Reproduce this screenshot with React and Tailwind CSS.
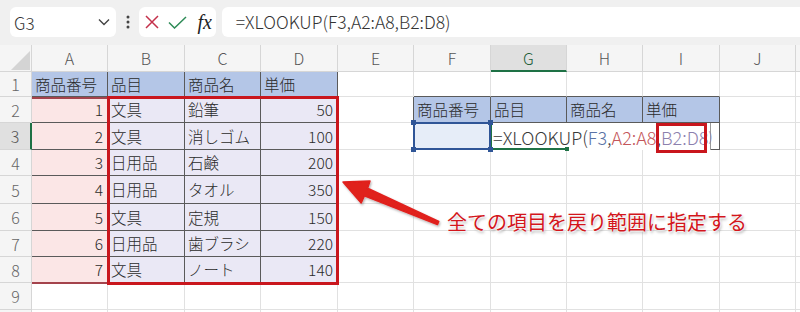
import React from 'react';

const LETTERS = ['A', 'B', 'C', 'D', 'E', 'F', 'G', 'H', 'I', 'J', ''];

const table1 = [
  ['商品番号', '品目', '商品名', '単価'],
  [1, '文具', '鉛筆', 50],
  [2, '文具', '消しゴム', 100],
  [3, '日用品', '石鹸', 200],
  [4, '日用品', 'タオル', 350],
  [5, '文具', '定規', 150],
  [6, '日用品', '歯ブラシ', 220],
  [7, '文具', 'ノート', 140],
];

const table2Head = ['商品番号', '品目', '商品名', '単価'];

// which cells belong to a bordered table
const inTable = (r, c) =>
  (r >= 1 && r <= 8 && c >= 0 && c <= 3) || (r >= 2 && r <= 3 && c >= 5 && c <= 8);

function Chevron() {
  return (
    <svg width="12" height="8" viewBox="0 0 12 8">
      <polyline points="1,1.5 6,6.5 11,1.5" fill="none" stroke="#444" strokeWidth="1.4" />
    </svg>
  );
}

function FormulaBar() {
  return (
    <div className="h-[45px] bg-[#f0f0f0] flex items-start pt-[7px] pl-[10px]">
      <div className="w-[110px] h-[30px] bg-white rounded-[6px] flex items-center justify-between pl-[4px] pr-[6px]">
        <span className="text-[17px] text-[#333] leading-none">G3</span>
        <Chevron />
      </div>
      <div className="w-[24px] h-[30px] flex items-center justify-center">
        <svg width="4" height="14" viewBox="0 0 4 14">
          <circle cx="2" cy="2" r="1.5" fill="#444" />
          <circle cx="2" cy="7" r="1.5" fill="#444" />
          <circle cx="2" cy="12" r="1.5" fill="#444" />
        </svg>
      </div>
      <div className="w-[79px] h-[30px] bg-white rounded-[6px] flex items-center pl-[6px] gap-[9px]">
        <svg width="14" height="14" viewBox="0 0 14 14">
          <path d="M1 1 L13 13 M13 1 L1 13" stroke="#c4314b" strokeWidth="1.5" fill="none" />
        </svg>
        <svg width="19" height="13" viewBox="0 0 19 13">
          <polyline points="1,6.5 6.5,12 18,1" stroke="#2e8b57" strokeWidth="1.5" fill="none" />
        </svg>
        <span className="font-['Liberation_Serif',serif] italic font-normal text-[20px] text-[#222] leading-none ml-[1px]">fx</span>
      </div>
      <div className="ml-[6px] w-[600px] h-[30px] bg-white rounded-l-[6px] flex items-center pl-[14px]">
        <span className="text-[17.5px] text-[#333] leading-none">=XLOOKUP(F3,A2:A8,B2:D8)</span>
      </div>
    </div>
  );
}

function Cell({ r, c }) {
  const rDark = inTable(r, c) || inTable(r, c + 1);
  const bDark = inTable(r, c) || inTable(r + 1, c);
  let bg = 'bg-white';
  if (r === 1 && c <= 3) bg = 'bg-[#b4c6e7]';
  else if (r >= 2 && r <= 8 && c === 0) bg = 'bg-[#fbe6e6]';
  else if (r >= 2 && r <= 8 && c >= 1 && c <= 3) bg = 'bg-[#eae8f5]';
  else if (r === 2 && c >= 5 && c <= 8) bg = 'bg-[#b4c6e7]';
  else if (r === 3 && c === 5) bg = 'bg-[#e6edf8]';

  let text = null;
  let right = false;
  if (r >= 1 && r <= 8 && c <= 3) {
    text = table1[r - 1][c];
    right = r > 1 && (c === 0 || c === 3);
  }
  if (r === 2 && c >= 5 && c <= 8) text = table2Head[c - 5];

  const base = `relative border-r border-b ${rDark ? 'border-r-[#5a5a5a]' : 'border-r-[#e1e1e1]'} ${
    bDark ? 'border-b-[#5a5a5a]' : 'border-b-[#e1e1e1]'
  } ${bg}`;

  if (r === 3 && c === 5) {
    return (
      <div className={base}>
        <div className="absolute -left-[1px] -top-[1px] -right-[1px] -bottom-[1px] border-2 border-[#2f5597] z-20">
          <div className="absolute -left-[4px] -top-[4px] w-[5px] h-[5px] bg-[#2f5597]" />
          <div className="absolute -right-[4px] -top-[4px] w-[5px] h-[5px] bg-[#2f5597]" />
          <div className="absolute -left-[4px] -bottom-[4px] w-[5px] h-[5px] bg-[#2f5597]" />
          <div className="absolute -right-[4px] -bottom-[4px] w-[5px] h-[5px] bg-[#2f5597]" />
        </div>
      </div>
    );
  }

  if (r === 3 && c === 6) {
    return (
      <div className={base}>
        <div className="absolute left-0 top-0 h-[27px] w-[220px] bg-white border-r border-[#9a9a9a] z-10 flex items-center pl-[2px] text-[18px] leading-none whitespace-nowrap">
          <span className="text-[#3a3a3a]">=XLOOKUP(</span>
          <span className="text-[#5b73a6]">F3</span>
          <span className="text-[#3a3a3a]">,</span>
          <span className="text-[#c4565a]">A2:A8</span>
          <span className="text-[#3a3a3a]">,</span>
          <span className="text-[#8c80ae]">B2:D8</span>
          <span className="text-[#8c80ae] text-[13px]">)</span>
          <div className="absolute left-0 bottom-0 w-[76px] h-[2px] bg-[#1e7145]" />
          <div className="absolute left-0 top-0 w-[1px] h-full bg-[#1e7145]" />
          <div className="absolute left-[74px] -bottom-[1px] w-[4px] h-[4px] bg-[#1e7145]" />
        </div>
      </div>
    );
  }

  return (
    <div className={base}>
      {text !== null && (
        <div
          className={`h-full flex items-center pt-[1px] px-[3px] text-[15.5px] text-[#2b2b2b] whitespace-nowrap leading-none ${
            right ? 'justify-end pr-[4px]' : ''
          }`}
        >
          {text}
        </div>
      )}
    </div>
  );
}

function Grid() {
  const rows = [1, 2, 3, 4, 5, 6, 7, 8, 9, 10];
  return (
    <div className="relative grid grid-cols-[32px_76px_77px_76px_77px_76px_77px_76px_76px_77px_76px_40px] grid-rows-[27px_25px_26px_27px_26px_28px_27px_26px_26px_27px_30px]">
      <div className="relative bg-[#f5f5f5] border-r border-b border-[#d6d6d6]">
        <svg className="absolute left-[11px] top-[6px]" width="19" height="19" viewBox="0 0 19 19">
          <polygon points="19,0 19,19 0,19" fill="#d4d4d4" />
        </svg>
      </div>
      {LETTERS.map((l, i) =>
        l === 'G' ? (
          <div
            key={i}
            className="bg-[#e0e0e0] border-r border-r-[#d6d6d6] border-b-2 border-b-[#1e7145] flex items-center justify-center text-[16px] text-[#1e5e38] leading-none"
          >
            {l}
          </div>
        ) : (
          <div
            key={i}
            className="bg-[#f5f5f5] border-r border-b border-[#d6d6d6] flex items-center justify-center text-[16px] text-[#555] leading-none"
          >
            {l}
          </div>
        )
      )}
      {rows.map((r) => (
        <React.Fragment key={r}>
          {r === 3 ? (
            <div className="bg-[#e0e0e0] border-r-2 border-r-[#1e7145] border-b border-b-[#d6d6d6] flex items-center justify-center text-[16px] text-[#555] leading-none">
              {r}
            </div>
          ) : (
            <div className="bg-[#f5f5f5] border-r border-b border-[#d6d6d6] flex items-center justify-center text-[16px] text-[#666] leading-none">
              {r < 10 ? r : ''}
            </div>
          )}
          {LETTERS.map((_, c) => (
            <Cell key={c} r={r} c={c} />
          ))}
        </React.Fragment>
      ))}

      {/* A2:A8 reference highlight */}
      <div className="absolute left-[32px] top-[52px] w-[75px] h-[187px] border-t-2 border-b-2 border-[#a4434c] pointer-events-none" />
      {/* B2:D8 red callout box */}
      <div className="absolute left-[107px] top-[51px] w-[232px] h-[189px] border-[3px] border-[#c9161d] pointer-events-none" />
      {/* red box around B2:D8 in the formula */}
      <div className="absolute left-[656px] top-[78px] w-[51px] h-[30px] border-[3px] border-[#c9161d] z-30 pointer-events-none" />
    </div>
  );
}

export default function App() {
  return (
    <div className="relative w-[800px] h-[312px] overflow-hidden bg-white font-['Noto_Sans_CJK_JP',sans-serif] font-light">
      <FormulaBar />
      <Grid />
      <svg className="absolute left-0 top-0 pointer-events-none z-40" width="800" height="312" viewBox="0 0 800 312">
        <defs>
          <filter id="sh" x="-10%" y="-10%" width="130%" height="130%">
            <feDropShadow dx="1" dy="1.5" stdDeviation="1.2" floodColor="#000" floodOpacity="0.3" />
          </filter>
        </defs>
        <polygon
          points="343,182 370,181 367.6,188.3 438.8,221.4 437.4,224.6 364.4,195.7 361.2,203"
          fill="#e0201f"
          stroke="#e0201f"
          strokeLinejoin="round"
          strokeWidth="1.5"
          filter="url(#sh)"
        />
      </svg>
      <div className="absolute left-[447px] top-[212px] z-40 text-[20px] font-normal leading-none text-[#d3161c] whitespace-nowrap [text-shadow:0_0_2px_#fff,0_0_2px_#fff,0_0_3px_#fff,1px_2px_3px_rgba(0,0,0,0.35)]">
        全ての項目を戻り範囲に指定する
      </div>
    </div>
  );
}
